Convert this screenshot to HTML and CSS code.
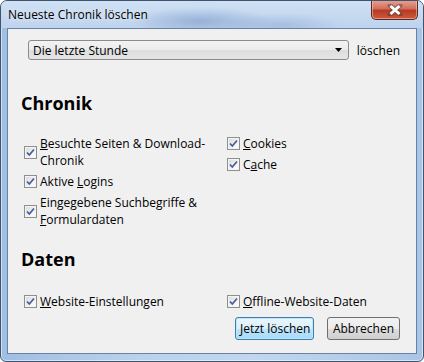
FILE: index.html
```html
<!DOCTYPE html>
<html lang="de">
<head>
    <meta charset="UTF-8">
    <title>Neueste Chronik löschen</title>
    <link rel="stylesheet" href="styles.css">
</head>
<body>
    <div class="window">
        <div class="titlebar">
            <span class="title">Neueste Chronik löschen</span>
            <div class="close-btn">
                <svg width="16" height="12" viewBox="0 0 16 12">
                    <path d="M3 1.5 L13 10.5 M13 1.5 L3 10.5" stroke="#3a3a3a" stroke-width="5" stroke-linecap="round" opacity="0.45"/>
                    <path d="M3.5 2 L12.5 10 M12.5 2 L3.5 10" stroke="#fff" stroke-width="3"/>
                </svg>
            </div>
        </div>

        <div class="client">
            <div class="range-row">
                <div class="select">
                    <span>Die letzte Stunde</span>
                    <svg class="arrow" width="7" height="4" viewBox="0 0 7 4"><path d="M0 0 H7 L3.5 4 Z" fill="#000"/></svg>
                </div>
                <span class="range-label">löschen</span>
            </div>

            <h2 class="group-title">Chronik</h2>
            <div class="options">
                <div class="col col-left">
                    <label class="check">
                        <span class="box"></span>
                        <span class="text"><u>B</u>esuchte Seiten &amp; Download-Chronik</span>
                    </label>
                    <label class="check">
                        <span class="box"></span>
                        <span class="text">Aktive <u>L</u>ogins</span>
                    </label>
                    <label class="check">
                        <span class="box"></span>
                        <span class="text">Eingegebene Suchbegriffe &amp; <u>F</u>ormulardaten</span>
                    </label>
                </div>
                <div class="col">
                    <label class="check">
                        <span class="box"></span>
                        <span class="text"><u>C</u>ookies</span>
                    </label>
                    <label class="check">
                        <span class="box"></span>
                        <span class="text">C<u>a</u>che</span>
                    </label>
                </div>
            </div>

            <h2 class="group-title data-title">Daten</h2>
            <div class="options data-options">
                <div class="col col-left">
                    <label class="check">
                        <span class="box"></span>
                        <span class="text"><u>W</u>ebsite-Einstellungen</span>
                    </label>
                </div>
                <div class="col">
                    <label class="check">
                        <span class="box"></span>
                        <span class="text"><u>O</u>ffline-Website-Daten</span>
                    </label>
                </div>
            </div>

            <div class="buttons">
                <button class="btn btn-default">Jetzt löschen</button>
                <button class="btn">Abbrechen</button>
            </div>
        </div>
    </div>
</body>
</html>
```

FILE: styles.css
```css
body {
    margin: 0;
    font-family: 'Open Sans', 'Noto Sans', sans-serif;
    font-size: 12px;
    color: #000;
    background: #fff;
}

.window {
    width: 424px;
    height: 362px;
    box-sizing: border-box;
    border: 1px solid #3f536e;
    border-radius: 7px 7px 6px 6px;
    background: linear-gradient(90deg, #9fbee3 0%, #b9d0ec 30%, #c2d6ee 60%, #a9c5e6 100%);
    box-shadow: inset 0 0 0 1px rgba(255, 255, 255, 0.55);
    display: flex;
    flex-direction: column;
    overflow: hidden;
}

.titlebar {
    height: 27px;
    display: flex;
    align-items: flex-start;
    justify-content: space-between;
    padding-left: 7px;
    background:
        radial-gradient(ellipse 70px 14px at 200px 20px, rgba(70, 110, 170, 0.35), transparent),
        radial-gradient(ellipse 60px 12px at 280px 24px, rgba(90, 125, 180, 0.25), transparent),
        linear-gradient(180deg, #cfe0f3 0%, #bdd3ee 100%);
}

.title {
    margin-top: 7px;
    line-height: 14px;
    color: #000;
    text-shadow: 0 0 6px rgba(255, 255, 255, 0.9);
}

.close-btn {
    width: 47px;
    height: 20px;
    margin-top: -1px;
    margin-right: 5px;
    box-sizing: border-box;
    border: 1px solid #5a2a22;
    border-top: none;
    border-radius: 0 0 5px 5px;
    background: linear-gradient(180deg, #e6a495 0%, #d2705c 45%, #b83a24 55%, #cc5a3e 100%);
    box-shadow: inset 0 0 0 1px rgba(255, 210, 200, 0.5);
    display: flex;
    align-items: center;
    justify-content: center;
}

.client {
    flex: 1;
    margin: 0 6px 7px 6px;
    border: 1px solid #6a819f;
    background: #f0f0f0;
    padding: 11px 16px 0 13px;
    display: flex;
    flex-direction: column;
}

.range-row {
    display: flex;
    align-items: center;
    gap: 8px;
    margin-left: 7px;
}

.select {
    width: 324px;
    height: 20px;
    box-sizing: border-box;
    border: 1px solid #8b8b8b;
    border-radius: 3px;
    background: linear-gradient(180deg, #f3f3f3 0%, #ebebeb 50%, #dddddd 51%, #e5e5e5 100%);
    display: flex;
    align-items: center;
    justify-content: space-between;
    padding: 0 4px 0 4px;
}

.arrow {
    margin-right: 2px;
}

.group-title {
    margin: 0;
    font-size: 18px;
    font-weight: bold;
    line-height: 22px;
    margin-top: 32px;
}

.data-title {
    margin-top: 20px;
}

.options {
    display: grid;
    grid-template-columns: 203px 1fr;
    margin-top: 21px;
    margin-left: 3px;
}

.data-options {
    margin-top: 23px;
}

.col {
    display: flex;
    flex-direction: column;
    gap: 4px;
}

.check {
    display: flex;
    align-items: center;
    gap: 3px;
    line-height: 17px;
}

.col-left .text {
    width: 178px;
}

.box {
    flex: none;
    width: 13px;
    height: 13px;
    box-sizing: border-box;
    border: 1px solid #8e8f8f;
    background:
        url("data:image/svg+xml,%3Csvg xmlns='http://www.w3.org/2000/svg' width='11' height='11'%3E%3Cpath d='M2 5.5 L4.3 8 L9 2.5' fill='none' stroke='%234a5e9a' stroke-width='1.8'/%3E%3C/svg%3E") center no-repeat,
        linear-gradient(135deg, #d6d6d6 0%, #f4f4f4 60%, #ffffff 100%);
    box-shadow: inset 0 0 0 1px #f4f4f4;
}

.buttons {
    display: flex;
    justify-content: flex-end;
    gap: 13px;
    margin-top: 7px;
}

.btn {
    height: 23px;
    box-sizing: border-box;
    font-family: 'Open Sans', 'Noto Sans', sans-serif;
    font-size: 12px;
    color: #000;
    white-space: nowrap;
    border: 1px solid #707070;
    border-radius: 3px;
    background: linear-gradient(180deg, #f2f2f2 0%, #ebebeb 50%, #dddddd 51%, #cfcfcf 100%);
    padding: 0 4px;
    width: 73px;
}

.btn-default {
    width: 79px;
    border-color: #3c7fb1;
    background: linear-gradient(180deg, #eaf6fd 0%, #d9f0fc 50%, #bee6fd 51%, #a7d9f5 100%);
    box-shadow: inset 0 0 0 1px #c2e4f6;
}
```
